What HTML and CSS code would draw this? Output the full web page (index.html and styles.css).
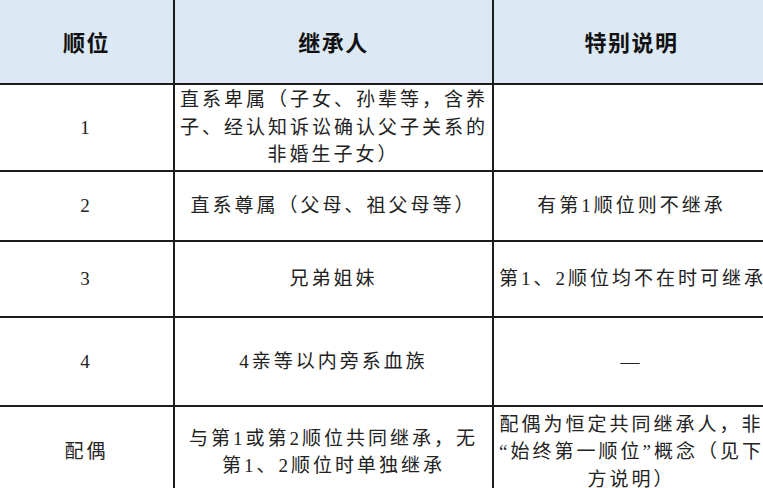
FILE: index.html
```html
<!DOCTYPE html>
<html lang="zh">
<head>
<meta charset="utf-8">
<link rel="stylesheet" href="styles.css">
</head>
<body>
<table class="heirs">
  <colgroup>
    <col class="c-order">
    <col class="c-heir">
    <col class="c-note">
  </colgroup>
  <thead>
    <tr class="r-head">
      <th>顺位</th>
      <th>继承人</th>
      <th>特别说明</th>
    </tr>
  </thead>
  <tbody>
    <tr class="r1">
      <td>1</td>
      <td class="nw">直系卑属（子女、孙辈等，含养<br>子、经认知诉讼确认父子关系的<br>非婚生子女）</td>
      <td></td>
    </tr>
    <tr class="r2">
      <td>2</td>
      <td>直系尊属（父母、祖父母等）</td>
      <td>有第1顺位则不继承</td>
    </tr>
    <tr class="r3">
      <td>3</td>
      <td>兄弟姐妹</td>
      <td class="nw">第1、2顺位均不在时可继承</td>
    </tr>
    <tr class="r4">
      <td>4</td>
      <td>4亲等以内旁系血族</td>
      <td>—</td>
    </tr>
    <tr class="r5">
      <td>配偶</td>
      <td class="nw">与第1或第2顺位共同继承，无<br>第1、2顺位时单独继承</td>
      <td class="nw">配偶为恒定共同继承人，非<br>“始终第一顺位”概念（见下<br>方说明）</td>
    </tr>
  </tbody>
</table>
</body>
</html>
```
FILE: styles.css
```css
html, body {
  margin: 0;
  padding: 0;
  background: #ffffff;
  overflow: hidden;
}

.heirs {
  border-collapse: collapse;
  table-layout: fixed;
  width: 771px;
  margin: -2px 0 0 -2px;
  font-family: "Liberation Serif", "Noto Sans CJK SC", serif;
  color: #222222;
}

.c-order { width: 175px; }
.c-heir { width: 319px; }
.c-note { width: 277px; }

.heirs th,
.heirs td {
  border: 2px solid #1c1c1c;
  text-align: center;
  vertical-align: middle;
  padding: 0 5px;
}

.heirs th {
  background: #dce9f5;
  font-family: "Noto Sans CJK SC", sans-serif;
  font-weight: 700;
  font-size: 22px;
  letter-spacing: 1.5px;
  color: #111111;
  padding-bottom: 2px;
}

.heirs td {
  font-size: 19px;
  letter-spacing: 3px;
  line-height: 27.5px;
}

.nw { white-space: nowrap; }

.r-head { height: 85px; }
.r1 { height: 87px; }
.r2 { height: 70px; }
.r3 { height: 76px; }
.r4 { height: 89px; }
.r5 { height: 92px; }
```
